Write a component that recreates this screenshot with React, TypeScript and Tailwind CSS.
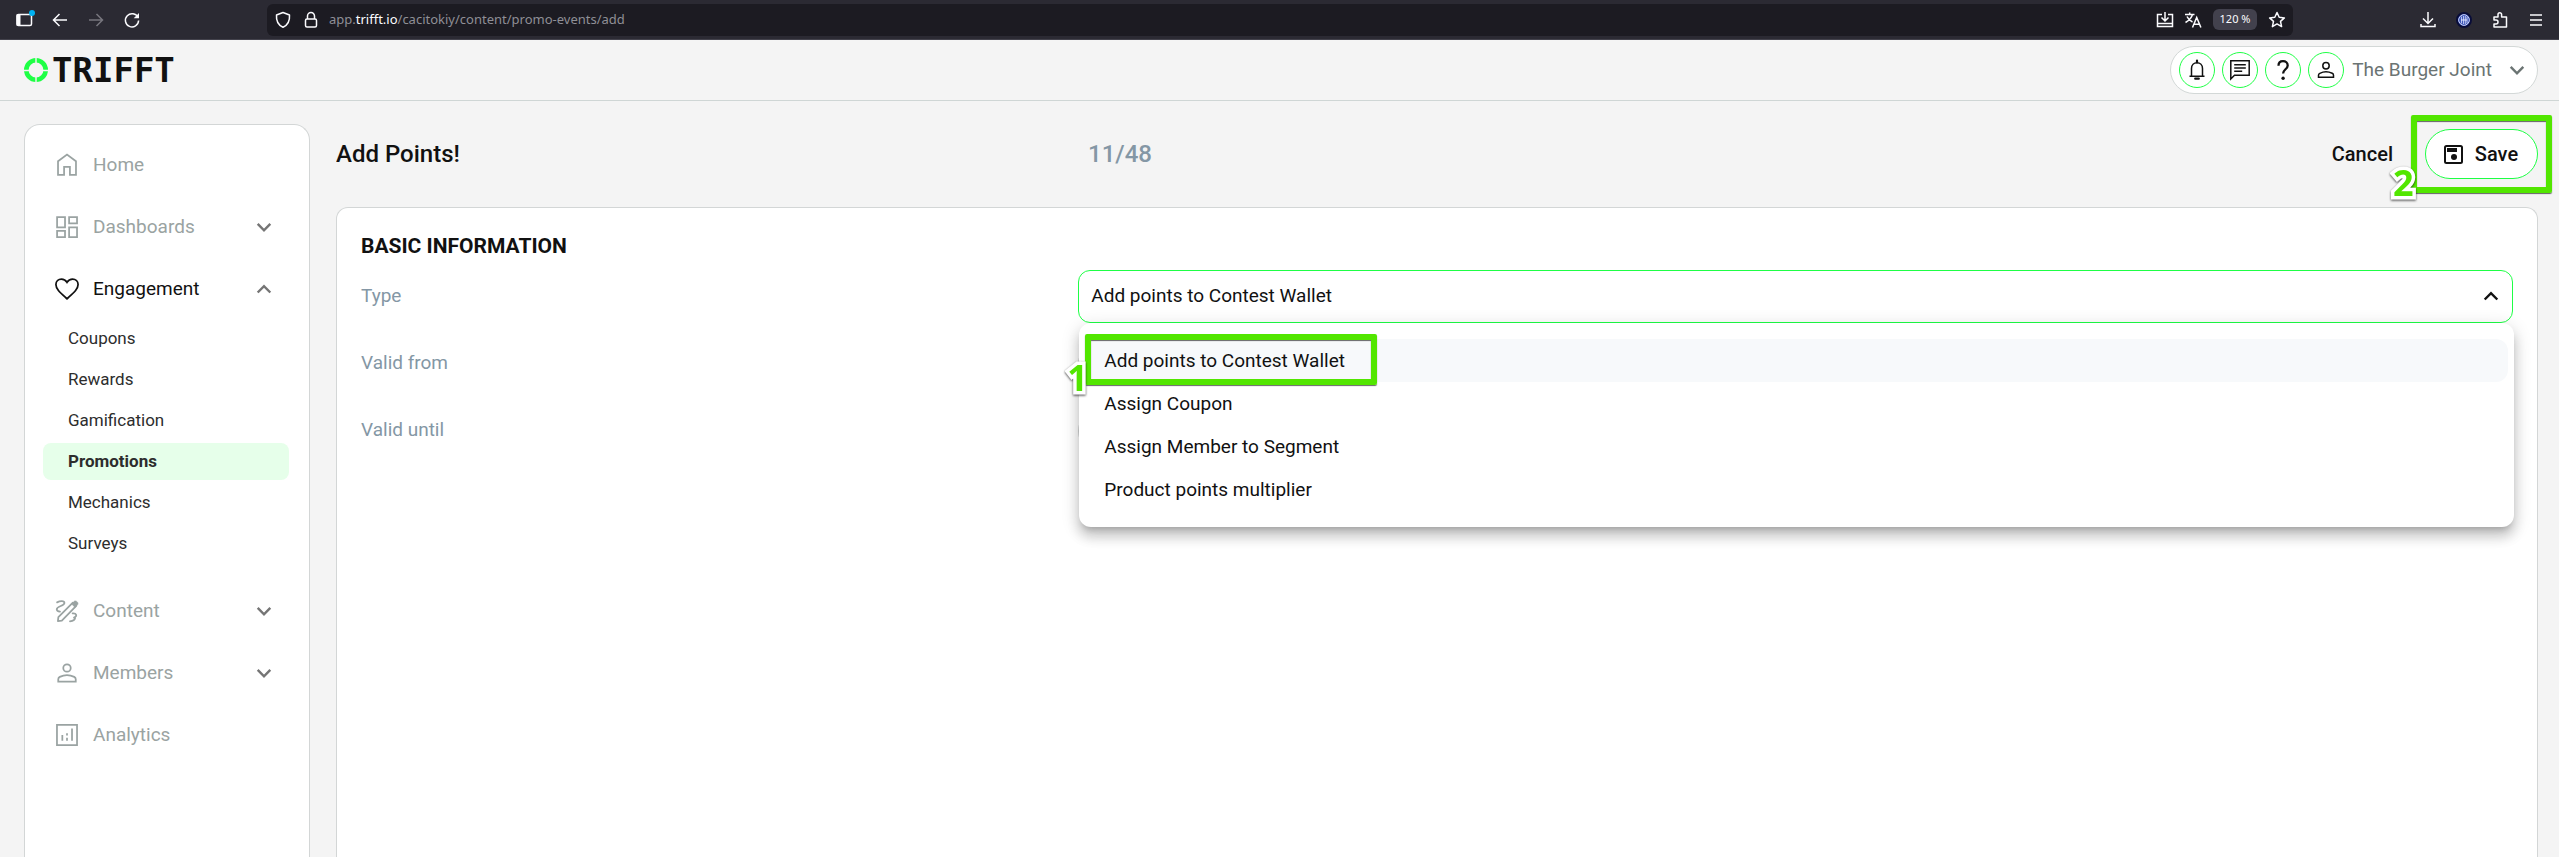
// App.tsx
import type { ReactNode } from 'react';

const subItems = ['Coupons', 'Rewards', 'Gamification', 'Promotions', 'Mechanics', 'Surveys'];
const typeOptions = ['Add points to Contest Wallet', 'Assign Coupon', 'Assign Member to Segment', 'Product points multiplier'];

const Icon = ({ children, className = 'size-7' }: { children: ReactNode; className?: string }) => (
  <svg viewBox="0 0 24 24" fill="none" stroke="currentColor" strokeWidth="1.5" className={`shrink-0 ${className}`} aria-hidden="true">
    {children}
  </svg>
);

const Chevron = ({ up = false, className = 'size-7' }: { up?: boolean; className?: string }) => (
  <Icon className={className}>
    <path d={up ? 'M6.6 15 12 9.6l5.4 5.4' : 'M6.6 9.4 12 14.8l5.4-5.4'} strokeWidth="2.1" />
  </Icon>
);

const PersonIcon = ({ className }: { className?: string }) => (
  <Icon className={className}>
    <circle cx="12" cy="7.7" r="3.2" />
    <path d="M4.5 19.3v-2c0-.9.5-1.6 1.3-2 4-1.9 8.4-1.9 12.4 0 .8.4 1.3 1.1 1.3 2v2z" />
  </Icon>
);

const navIcons: Record<string, ReactNode> = {
  Home: (
    <Icon>
      <path d="M4.3 20.5V8.8L12 3l7.7 5.8v11.7h-5.2v-7h-5v7z" />
    </Icon>
  ),
  Dashboards: (
    <Icon>
      <path d="M3.5 3.5h6.8v8.8H3.5zM13.8 3.5h6.8v5.3h-6.8zM3.5 15.3h6.8v5.3H3.5zM13.8 12.3h6.8v8.3h-6.8z" />
    </Icon>
  ),
  Engagement: (
    <Icon>
      <path d="M12 20.4 10.8 19.3C5.5 14.5 2.5 11.8 2.5 8.2 2.5 5.5 4.6 3.5 7.2 3.5c1.9 0 3.7 1 4.8 2.8 1.1-1.8 2.9-2.8 4.8-2.8 2.6 0 4.7 2 4.7 4.7 0 3.6-3 6.3-8.3 11.1z" />
    </Icon>
  ),
  Content: (
    <Icon>
      <path d="M3.5 4.6c2.5-1.3 6.3-1.6 6.3.6 0 2.6-6.6 2.5-6.6 5.4 0 1.3 1.2 1.9 2.8 2M16.8 14.1c3.4-.3 4.3 2 1.2 3.6M14.5 20.8c2.8-.2 5-1.6 4.4-3.7" strokeLinecap="round" />
      <path d="M4.2 20.7l.4-3.5L17 4.8l2.9 2.9L7.6 20.2z" strokeLinejoin="round" />
      <path d="M16 6l2-2.2c1.5-1.5 4.5 1.2 3 2.9L18.9 8.9z" fill="currentColor" strokeWidth=".5" />
    </Icon>
  ),
  Members: <PersonIcon />,
  Analytics: (
    <Icon>
      <path d="M3.4 3.4h17.2v17.2H3.4z" />
      <path d="M8 17v-5M12 17v-2.6M12 12.5v-2M16.3 17V6.5" />
    </Icon>
  ),
};

const NavItem = ({ label, open, active }: { label: string; open?: boolean; active?: boolean }) => (
  <button type="button" className={`flex h-[62px] w-full items-center gap-3 pl-7 pr-[31px] text-left text-[19px] ${active ? 'text-[#111]' : 'text-[#9aa3a2]'}`}>
    {navIcons[label]}
    <span className="flex-1">{label}</span>
    {open !== undefined && <Chevron up={open} className="size-7 text-[#757575]" />}
  </button>
);

const CalloutNumber = ({ children, className }: { children: ReactNode; className: string }) => (
  <span
    className={`absolute font-['Open_Sans',sans-serif] text-4xl leading-9 font-bold text-[#52e600] [-webkit-text-stroke:7px_white] [paint-order:stroke_fill] drop-shadow-[0_1px_1px_rgba(0,0,0,0.7)] ${className}`}
  >
    {children}
  </span>
);

const BrowserBar = () => (
  <div className="flex h-10 items-center border-b border-[#43424c] bg-[#2b2a33] text-[#fbfbfe]">
    <div className="flex w-[267px] shrink-0 items-center gap-3 pl-3">
      <button type="button" aria-label="Sidebar" className="relative">
        <Icon className="size-6">
          <rect x="5" y="6.5" width="14.5" height="11" rx="1.5" />
          <path d="M4.5 6.5h4v11h-4z" fill="currentColor" stroke="none" />
        </Icon>
        <span className="absolute top-0.5 right-px size-1.5 rounded-full bg-[#00b3f4]" />
      </button>
      <button type="button" aria-label="Back">
        <Icon className="size-6">
          <path d="M19 12H5.5M11.5 6 5.5 12l6 6" />
        </Icon>
      </button>
      <button type="button" aria-label="Forward" className="text-[#77767e]">
        <Icon className="size-6">
          <path d="M5 12h13.5M12.5 6l6 6-6 6" />
        </Icon>
      </button>
      <button type="button" aria-label="Reload">
        <Icon className="size-6">
          <path d="M18 9.5A6.6 6.6 0 1 0 18.6 12.5" />
          <path d="M19 5v5.3h-5.3z" fill="currentColor" stroke="none" />
        </Icon>
      </button>
    </div>
    <div className="flex h-8 flex-1 items-center rounded-md bg-[#1c1b22] pr-1">
      <Icon className="ml-1 size-6">
        <path d="M12 4.5 18.5 7c.4 5-1.6 10-6.5 12.3C7.1 17 5.1 12 5.5 7z" strokeLinejoin="round" />
      </Icon>
      <Icon className="ml-1 size-6">
        <rect x="6.5" y="11" width="11" height="8" rx="1.5" />
        <path d="M8.5 11V8a3.5 3.5 0 0 1 7 0v3" />
      </Icon>
      <a href="#url" className="ml-1.5 flex-1 font-['Noto_Sans',sans-serif] text-[13px] text-[#8f8f96]">
        app.<span className="text-[#fbfbfe]">trifft.io</span>/cacitokiy/content/promo-events/add
      </a>
      <div className="flex items-center gap-1">
        <Icon className="size-6">
          <path d="M9 6.5H4.5V15M15 6.5h4.5V15M12 4v8.5M8.5 9.5l3.5 3.5 3.5-3.5M4.5 14v4.5h15V14M4.5 15.5h15" />
        </Icon>
        <Icon className="size-6">
          <path d="M4 6.5h9.5M8.7 4.5v2M11.5 6.5c-1 3.5-3.5 6-7 8M6 8.5c1 2.3 3 4.3 5.5 5.5M11.5 19.5l4.2-10 4.2 10M13 16.3h5.5" />
        </Icon>
        <button type="button" className="mx-1 h-[21px] w-11 rounded-md bg-[#42414d] font-['Noto_Sans',sans-serif] text-[11px]">
          120 %
        </button>
        <Icon className="size-6">
          <path d="M12 4.5l2.2 4.8 5.2.6-3.9 3.5 1.1 5.2-4.6-2.7-4.6 2.7 1.1-5.2-3.9-3.5 5.2-.6z" strokeLinejoin="round" />
        </Icon>
      </div>
    </div>
    <div className="flex shrink-0 items-center gap-3 pr-[11px] pl-[123px]">
      <Icon className="size-6">
        <path d="M12 4v11M7 10.5l5 5 5-5M5 16v2.5h14V16" />
      </Icon>
      <Icon className="size-6">
        <circle cx="12" cy="12" r="7" fill="#1633a8" stroke="#090d39" strokeWidth="2" />
        <circle cx="12" cy="12" r="5.3" stroke="#dfe5ff" strokeWidth="1" />
        <path d="M9.3 8.5v7M11.3 8v8M13.2 8v8M15 8.5v7M9 12h6" stroke="#dfe5ff" strokeWidth="1" />
      </Icon>
      <Icon className="size-6">
        <path d="M6 9h4V6.5a1.8 1.8 0 0 1 3.6 0V9h4.9v10H6v-3h2a2 2 0 0 0 0-4H6z" strokeLinejoin="round" />
      </Icon>
      <Icon className="size-6">
        <path d="M6 7h12M6 12h12M6 17h12" />
      </Icon>
    </div>
  </div>
);

const RoundButton = ({ label, children }: { label: string; children: ReactNode }) => (
  <button type="button" aria-label={label} className="flex size-9 items-center justify-center rounded-full border border-[#1eff45] bg-white text-[#111]">
    {children}
  </button>
);

const Header = () => (
  <header className="flex h-[61px] items-center justify-between border-b border-[#cfd6d5] pr-[21px] pl-6">
    <a href="#home" className="flex items-center gap-1 text-[#111]">
      <svg viewBox="0 0 24 24" className="size-6" aria-hidden="true">
        <circle cx="12" cy="12" r="9.7" fill="none" stroke="#1eff45" strokeWidth="4.6" />
        <path d="M12 0v24M0 12.5h24" stroke="#f4f4f4" strokeWidth="1.4" />
      </svg>
      <span className="font-['DejaVu_Sans_Mono',monospace] text-[34px] leading-9 font-bold">TRIFFT</span>
    </a>
    <div className="flex h-12 items-center gap-[7px] rounded-full border border-[#d3d8d7] bg-white pr-1.5 pl-2">
      <RoundButton label="Notifications">
        <Icon className="size-6">
          <path d="M4.5 18.2h15M6.5 18V10.5C6.5 7 9 4.7 12 4.7s5.5 2.3 5.5 5.8V18" />
          <path d="M12 2.5v2M10.2 20.7h3.6" strokeWidth="2.2" strokeLinecap="round" />
        </Icon>
      </RoundButton>
      <RoundButton label="Messages">
        <Icon className="size-6">
          <path d="M2.8 21V2.8h18.4v14.4H6.5z" />
          <path d="M6.2 6.8h11.6M6.2 10h11.6M6.2 13.2h8" />
        </Icon>
      </RoundButton>
      <RoundButton label="Help">
        <Icon className="size-6">
          <path d="M7.5 7.8C7.5 5 9.3 3.2 12 3.2s4.7 1.7 4.7 4.2c0 3.7-4.6 4.1-4.6 8.2" strokeWidth="2.3" />
          <circle cx="12.1" cy="20.2" r="1.7" fill="currentColor" stroke="none" />
        </Icon>
      </RoundButton>
      <RoundButton label="Account">
        <PersonIcon className="size-6" />
      </RoundButton>
      <button type="button" className="flex items-center gap-[11px] pl-px text-[19px] text-[#6b7473]">
        The Burger Joint
        <Chevron />
      </button>
    </div>
  </header>
);

const Sidebar = () => (
  <nav className="w-[286px] shrink-0 rounded-t-2xl border border-b-0 border-[#d3d6d6] bg-white pt-[9px]">
    <NavItem label="Home" />
    <NavItem label="Dashboards" open={false} />
    <NavItem label="Engagement" open active />
    <ul className="mr-5 mb-[18px] ml-[18px] flex flex-col gap-1">
      {subItems.map((item) => (
        <li key={item}>
          <a
            href={`#${item.toLowerCase()}`}
            className={`flex h-[37px] items-center rounded-lg pl-[25px] text-[17px] text-[#2d2d2d] ${item === 'Promotions' ? 'bg-[#e6ffea] font-bold' : ''}`}
          >
            {item}
          </a>
        </li>
      ))}
    </ul>
    <NavItem label="Content" open={false} />
    <NavItem label="Members" open={false} />
    <NavItem label="Analytics" />
  </nav>
);

const TypeMenu = () => (
  <ul
    role="listbox"
    aria-label="Type"
    className="absolute top-full -right-px left-px z-10 rounded-xl bg-white px-1.5 py-4 shadow-[0_6px_6px_-4px_rgba(0,0,0,0.2),0_10px_12px_1px_rgba(0,0,0,0.14),0_4px_17px_2px_rgba(0,0,0,0.12)]"
  >
    {typeOptions.map((option, i) => (
      <li
        key={option}
        role="option"
        aria-selected={i === 0}
        className={`relative flex h-[43px] items-center rounded-xl pt-px pl-[19px] ${i === 0 ? 'bg-[#f7f9fb]' : ''}`}
      >
        {option}
        {i === 0 && (
          <span className="absolute -top-[5px] left-0 h-[51px] w-[292px] rounded-xs border-6 border-[#52e600] shadow-[0_1px_1px_rgba(0,0,0,0.6),inset_0_1px_1px_rgba(0,0,0,0.6)]">
            <CalloutNumber className="top-5 -left-6">1</CalloutNumber>
          </span>
        )}
      </li>
    ))}
  </ul>
);

const FormCard = () => (
  <section className="flex-1 rounded-t-xl border border-b-0 border-[#d3d6d6] bg-white px-6 pt-6">
    <h2 className="text-[21px] leading-7 font-bold text-[#111]">BASIC INFORMATION</h2>
    <div className="mt-2.5 flex flex-col gap-3.5 text-[19px] text-[#111]">
      <div className="grid grid-cols-3 items-center">
        <label htmlFor="type" className="text-[#8497a5]">Type</label>
        <div className="relative col-span-2">
          <select id="type" className="block h-[53px] w-full appearance-none rounded-xl border border-[#1eff45] bg-white px-3">
            {typeOptions.map((option) => (
              <option key={option}>{option}</option>
            ))}
          </select>
          <Chevron up className="pointer-events-none absolute top-3 right-2 size-7" />
          <TypeMenu />
        </div>
      </div>
      <div className="grid h-[53px] grid-cols-3 items-center">
        <label htmlFor="valid-from" className="text-[#8497a5]">Valid from</label>
        <input id="valid-from" type="text" className="h-12 rounded-full border border-[#d3d6d6] px-4" />
      </div>
      <div className="grid h-[53px] grid-cols-3 items-center">
        <label htmlFor="valid-until" className="text-[#8497a5]">Valid until</label>
        <input id="valid-until" type="text" className="h-12 rounded-full border border-[#d3d6d6] px-4" />
      </div>
    </div>
  </section>
);

export default function App() {
  return (
    <div className="flex min-h-screen flex-col bg-[#f4f4f4] font-[Roboto,sans-serif]">
      <BrowserBar />
      <Header />
      <div className="flex flex-1 gap-[26px] pr-[21px] pl-6">
        <div className="flex pt-[23px]">
          <Sidebar />
        </div>
        <main className="flex flex-1 flex-col pt-7">
          <div className="mb-7 grid h-[50px] grid-cols-3 items-center text-[#111]">
            <input aria-label="Name" defaultValue="Add Points!" className="w-full text-2xl font-medium outline-none" />
            <span className="pl-[18px] text-2xl font-medium text-[#8497a5]">11/48</span>
            <div className="flex items-center justify-end gap-8 text-xl font-medium">
              <button type="button">Cancel</button>
              <div className="relative">
                <button type="button" className="flex h-[50px] w-[113px] items-center justify-center gap-2.5 rounded-full border border-[#1eff45] bg-white">
                  <Icon className="-ml-1 size-6">
                    <rect x="4" y="4" width="17" height="17" rx="1.5" strokeWidth="2" />
                    <path d="M6 6h10v4H6z" fill="currentColor" stroke="none" />
                    <circle cx="13" cy="15" r="3" fill="currentColor" stroke="none" />
                  </Icon>
                  Save
                </button>
                <span className="pointer-events-none absolute -inset-3.5 rounded-xs border-6 border-[#52e600] shadow-[0_1px_1px_rgba(0,0,0,0.6),inset_0_1px_1px_rgba(0,0,0,0.6)]">
                  <CalloutNumber className="top-11 -left-6">2</CalloutNumber>
                </span>
              </div>
            </div>
          </div>
          <FormCard />
        </main>
      </div>
    </div>
  );
}
